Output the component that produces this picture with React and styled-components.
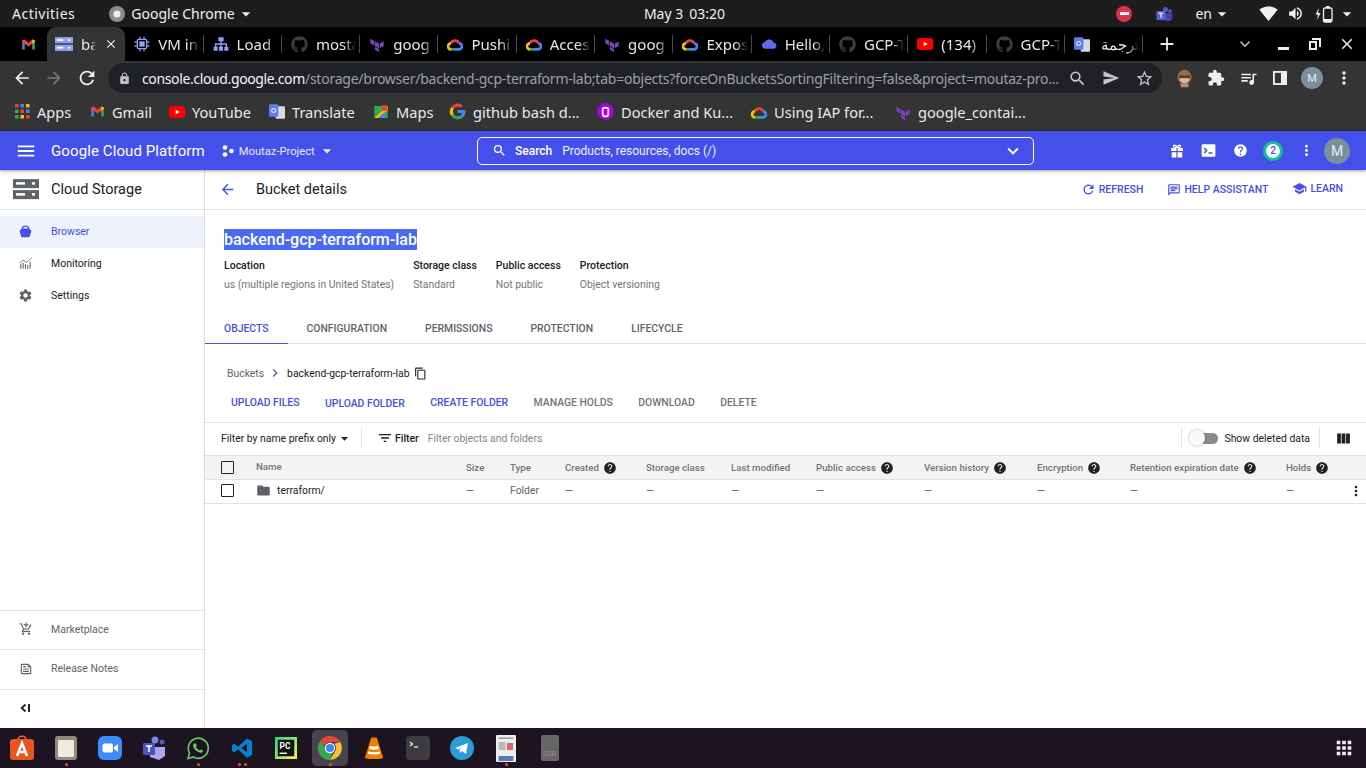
import React from 'react';
import styled, { createGlobalStyle } from 'styled-components';
import {
  MdMenu, MdArrowBack, MdSearch, MdExpandMore, MdHelp, MdMoreVert, MdFolder, MdContentCopy, MdFilterList,
  MdViewColumn, MdSettings, MdSchool, MdRefresh, MdStarBorder, MdExtension, MdQueueMusic, MdLock,
  MdSend, MdArrowDropDown, MdClose, MdAdd, MdChevronRight, MdArrowForward, MdSignalWifi4Bar, MdVolumeUp,
  MdApps, MdKeyboardArrowDown, MdOutlineAddShoppingCart, MdOutlineFeed, MdOutlineChat
} from 'react-icons/md';
import { FaGithub } from 'react-icons/fa';

const Global = createGlobalStyle`
  html, body { margin: 0; padding: 0; height: 100%; overflow: hidden; background: #fff; }
  * { box-sizing: border-box; }
  #root { height: 768px; width: 1366px; }
  ::selection { background: #4a6af5; }
`;

const UI = `"Noto Sans", "Open Sans", sans-serif`;
const RB = `Roboto, "Liberation Sans", sans-serif`;
const BLUE = '#4550ea';
const CHROME = '#343434';

const Page = styled.div`
  width: 1366px; height: 768px; display: flex; flex-direction: column; overflow: hidden;
`;

/* ---------- Ubuntu top bar ---------- */
const TopBar = styled.div`
  height: 27px; background: #1d1d1d; color: #f0f0f0; display: grid; grid-template-columns: 1fr auto 1fr;
  align-items: center; font: 14px ${UI}; padding: 0 9px 0 12px; flex: none;
`;
const TopLeft = styled.div`display: flex; align-items: center;`;
const Activities = styled.span`letter-spacing: 0.5px;`;
const TopApp = styled.div`display: flex; align-items: center; gap: 6px; margin-left: 34px;`;
const TopCenter = styled.div`display: flex; gap: 6px;`;
const TopRight = styled.div`display: flex; align-items: center; justify-content: flex-end;`;
const NoEntry = styled.span`
  width: 16px; height: 16px; border-radius: 50%; background: #e0314a; display: flex; align-items: center; justify-content: center;
  &::after { content: ''; width: 9px; height: 2.5px; background: #fff; }
`;
const Lang = styled.span`display: flex; align-items: center; margin: 0 27px 0 22px; font-size: 14px;`;
const Dim = styled.span`display: inline-flex; margin-left: ${p => p.$ml || 0}px;`;

/* ---------- Chrome tabs ---------- */
const TabStrip = styled.div`height: 34px; background: #000; display: flex; align-items: stretch; flex: none; color: #e8e8e8;`;
const PinTab = styled.div`width: 47px; display: flex; align-items: center; justify-content: center; padding-left: 9px;`;
const Tab = styled.div`
  width: 78.3px; display: flex; align-items: center; padding-left: ${p => p.$active ? 8 : 9}px; gap: 8px; font: 15px ${UI};
  position: relative; flex: none;
  background: ${p => p.$active ? CHROME : 'transparent'};
  border-radius: ${p => p.$active ? '9px 9px 0 0' : 0};
  &::after {
    content: ''; position: absolute; right: 0; top: 8px; bottom: 8px; width: 1px;
    background: ${p => p.$sep ? '#4a4a4a' : 'transparent'};
  }
`;
const TabText = styled.span`
  flex: 1; min-width: 0; overflow: hidden; white-space: nowrap; margin-right: ${p => p.$active ? 0 : 4}px;
  -webkit-mask-image: linear-gradient(to right, #000 70%, transparent);
  mask-image: linear-gradient(to right, #000 70%, transparent);
`;
const TabX = styled.span`display: flex; margin-right: 7px; color: #eee;`;
const NewTab = styled.div`width: 48px; display: flex; align-items: center; justify-content: center;`;
const WinCtl = styled.div`
  margin-left: auto; display: grid; grid-template-columns: 44px 32px 32px 32px; justify-items: center; align-items: center;
  padding-right: 3px; color: #eee;
`;
const WinMin = styled.span`width: 11px; height: 2.5px; background: #eee; margin-top: 9px;`;

/* ---------- Chrome toolbar ---------- */
const Toolbar = styled.div`
  height: 34px; background: ${CHROME}; display: flex; align-items: center; flex: none; color: #eee; padding-left: 12px;
`;
const NavBtns = styled.div`display: flex; align-items: center; gap: 12px; width: 96px;`;
const Omni = styled.div`
  width: 1054px; height: 30px; background: #202124; border-radius: 15px; display: flex; align-items: center; padding: 0 8px 0 10px;
  font: 14px ${UI}; color: #9aa0a6;
`;
const Url = styled.div`
  flex: 1; white-space: nowrap; overflow: hidden; margin-left: 11px; letter-spacing: -0.24px;
  b { font-weight: 400; color: #f1f3f4; letter-spacing: -0.37px; }
`;
const OmniIcons = styled.div`display: flex; align-items: center; gap: 15px; color: #c4c7c5; margin-left: 8px;`;
const ToolRight = styled.div`display: flex; align-items: center; margin-left: 6px;`;
const ToolSlot = styled.span`width: 32px; display: flex; justify-content: center; flex: none;`;
const Avatar = styled.span`
  width: ${p => p.$s}px; height: ${p => p.$s}px; border-radius: 50%; background: #78909c; color: #e8eaed; flex: none;
  display: flex; align-items: center; justify-content: center; font: ${p => p.$f}px ${RB}; margin-left: ${p => p.$ml || 0}px;
`;

/* ---------- Bookmarks ---------- */
const Bookmarks = styled.div`
  height: 36px; background: ${CHROME}; display: flex; align-items: center; flex: none; padding: 0 0 2px 15px; color: #e8eaed;
  font: 14.6px ${UI}; border-bottom: 1px solid #2a2a2a;
`;
const Bm = styled.div`display: flex; align-items: center; gap: 7px; width: ${p => p.$w}px; flex: none; white-space: nowrap;`;

/* ---------- GCP bar ---------- */
const GcpBar = styled.div`
  height: 39px; background: ${BLUE}; display: grid; grid-template-columns: 477px 557px 1fr; align-items: center; flex: none; color: #fff;
  position: relative; z-index: 2; box-shadow: 0 1px 3px rgba(0,0,0,.4);
`;
const GcpLeft = styled.div`display: flex; align-items: center; padding-left: 15px;`;
const Brand = styled.span`font: 15px ${RB}; margin-left: 14px; letter-spacing: 0.1px; white-space: nowrap;`;
const Project = styled.span`display: flex; align-items: center; margin-left: 17px; font: 11.2px ${RB}; color: #e8e9fd; gap: 5px; padding-top: 1px;`;
const Search = styled.div`
  height: 28px; border: 1px solid #fff; border-radius: 5px; display: flex; align-items: center; padding: 0 9px 0 14px; font: 12px ${RB};
  b { font-weight: 500; margin: 0 10px 0 8px; }
  span { flex: 1; color: #f0f0ff; }
`;
const GcpRight = styled.div`display: flex; align-items: center; padding-left: 136px; gap: 14px;`;
const IconSlot = styled.span`width: ${p => p.$w || 18}px; display: flex; justify-content: center; flex: none; margin-left: ${p => p.$ml || 0}px;`;
const Notif = styled.span`
  width: 20px; height: 20px; border-radius: 50%; background: #fff; border: 3px solid #10c29a; color: ${BLUE}; font: 500 10px ${RB};
  display: flex; align-items: center; justify-content: center; flex: none;
`;

/* ---------- Main ---------- */
const Body = styled.div`flex: 1; display: flex; min-height: 0; background: #fff; font: 10.5px ${RB};`;
const Side = styled.aside`width: 205px; border-right: 1px solid #dcdcdc; display: flex; flex-direction: column; flex: none;`;
const SideHead = styled.div`
  height: 40px; border-bottom: 1px solid #e2e2e2; display: flex; align-items: center; padding-left: 13px; gap: 12px;
  font: 14.5px ${RB}; color: #202124; flex: none;
`;
const SideNav = styled.nav`padding-top: 6px; flex: 1;`;
const NavItem = styled.div`
  height: 32px; display: flex; align-items: center; padding-bottom: 2px; color: ${p => p.$active ? BLUE : '#202124'};
  background: ${p => p.$active ? '#eef2fd' : 'transparent'};
`;
const NavIcon = styled.span`width: 51px; display: flex; justify-content: center; color: ${p => p.$c || '#5f6368'}; flex: none;`;
const FootItem = styled.div`
  height: ${p => p.$h}px; border-top: 1px solid #e2e2e2; display: flex; align-items: center; color: #5f6368; flex: none; padding-bottom: 2px;
`;
const Main = styled.main`flex: 1; min-width: 0; display: flex; flex-direction: column;`;
const PageHead = styled.div`
  height: 40px; border-bottom: 1px solid #e2e2e2; display: flex; align-items: center; padding-left: 14px; font: 14.5px ${RB}; color: #202124; flex: none;
`;
const HeadTitle = styled.div`margin-left: 20px; flex: 1;`;
const HeadActions = styled.div`display: flex; align-items: center; padding: 0 23px 2px 0; gap: 24px; color: ${BLUE}; font: 500 10.5px ${RB};`;
const HeadAct = styled.span`display: flex; align-items: center; gap: 3px; white-space: nowrap; transform: translateY(${p => p.$dy || 0}px);`;
const Summary = styled.section`padding: 19px 19px 0; flex: none; height: 100px;`;
const BucketName = styled.div`
  display: inline-block; background: #4a6af5; color: #fff; font: 500 16px/21px ${RB};
`;
const Meta = styled.div`display: flex; gap: 19px; margin-top: 10px;`;
const MetaCol = styled.div`display: flex; flex-direction: column; gap: 6px;`;
const MetaLabel = styled.div`font: 500 10.5px/12px ${RB}; color: #202124;`;
const MetaVal = styled.div`font: 10.4px/14px ${RB}; color: #70757a;`;
const Tabs = styled.div`height: 34px; border-bottom: 1px solid #e2e2e2; display: flex; flex: none;`;
const TabItem = styled.div`
  padding: 0 19px; font: 500 10.4px/38px ${RB}; height: 34px; color: ${p => p.$active ? BLUE : '#5f6368'};
  border-bottom: ${p => p.$active ? `1px solid ${BLUE}` : '0'};
`;
const Crumb = styled.div`
  display: flex; align-items: center; height: 20px; margin: 19px 0 0 22px; color: #202124; font: 10.4px ${RB}; flex: none;
`;
const CrumbDim = styled.span`color: #5f6368;`;
const Actions = styled.div`
  display: flex; align-items: center; height: 40px; gap: 25.5px; padding: 0 0 1px 26px; flex: none; font: 500 10.4px ${RB};
  border-bottom: 1px solid #e2e2e2;
`;
const Act = styled.span`color: ${p => p.$on ? BLUE : '#70757a'}; transform: translateY(${p => p.$dy || 0}px);`;
const FilterRow = styled.div`height: 32px; display: flex; align-items: center; flex: none; padding: 0 0 2px 16px; color: #202124; font: 10.4px ${RB};`;
const VBar = styled.span`width: 1px; height: 20px; background: #e2e2e2; flex: none; margin: ${p => p.$m};`;
const FilterHint = styled.span`color: #80868b; flex: 1; margin-left: 9px;`;
const FilterBold = styled.b`font-weight: 500; margin-left: 2px;`;
const Toggle = styled.span`
  width: 30px; height: 12px; flex: none; position: relative; margin: 0 5px 0 7px;
  &::before { content: ''; position: absolute; left: 8px; right: 1px; top: 1px; bottom: 0; border-radius: 6px; background: #8a8a8a; }
  &::after { content: ''; position: absolute; left: 0; top: -2px; width: 16px; height: 16px; border-radius: 50%; background: #fafafa; box-shadow: 0 0 2px rgba(0,0,0,.4); }
`;
const Cols = '51px 210px 44px 55px 81px 85px 85px 108px 113px 93px 156px 1fr';
const Row = styled.div`
  display: grid; grid-template-columns: ${Cols}; align-items: center; height: ${p => p.$head ? 25 : 24}px; flex: none;
  padding-bottom: ${p => p.$head ? 0 : 2}px;
  background: ${p => p.$head ? '#f3f3f3' : '#fff'}; border-top: ${p => p.$head ? '1px solid #e2e2e2' : 0};
  border-bottom: 1px solid #e2e2e2; color: ${p => p.$head ? '#70757a' : '#5f6368'};
  font: ${p => p.$head ? '500 9.7px' : '10.4px'} ${RB};
`;
const Cell = styled.div`display: flex; align-items: center; gap: 4px; white-space: nowrap;`;
const NameCell = styled(Cell)`transform: translateY(-1px);`;
const Check = styled.span`width: 13px; height: 13px; border: 1.5px solid #202124; border-radius: 1px; margin-left: 16px;`;
const FolderName = styled.span`color: #202124; margin-left: 2px;`;
const Spread = styled.div`flex: 1; display: flex; align-items: center; justify-content: space-between; padding-right: 2px;`;

/* ---------- Dock ---------- */
const Dock = styled.div`height: 40px; background: #1c1420; display: flex; align-items: center; flex: none;`;
const DockItem = styled.div`
  width: 44px; height: 40px; display: flex; align-items: center; justify-content: center; position: relative; flex: none;
  &::before {
    content: ''; position: absolute; left: 4px; right: 4px; top: 2px; bottom: 2px; border-radius: 5px;
    background: ${p => p.$active ? '#47424b' : 'transparent'};
  }
  svg { position: relative; }
`;
const Dots = styled.span`
  position: absolute; bottom: 2px; left: 0; right: 0; display: flex; gap: 3px; justify-content: center;
  i { width: 3px; height: 3px; border-radius: 50%; background: #e95420; }
`;
const DockEnd = styled.div`margin-left: auto; padding-right: 11px; color: #eee; display: flex;`;

/* ---------- Logos ---------- */
const Gmail = ({ s = 15 }) => (
  <svg width={s} height={s} viewBox="0 0 24 24"><path fill="#4285f4" d="M2 5v15h4V10z"/><path fill="#34a853" d="M22 5v15h-4V10z"/><path fill="#ea4335" d="M2 5l4-1 6 5 6-5 4 1v3l-10 7L2 8z"/><path fill="#fbbc04" d="M18 4l4 1v3l-4 3z"/></svg>
);
const GCloud = ({ s = 16, mono }) => (
  <svg width={s} height={s} viewBox="0 0 24 24" fill="none" strokeWidth="4">
    {mono ? <path fill="#5b6cf0" d="M7 19a5 5 0 0 1-1-10 7 7 0 0 1 13 1 4.5 4.5 0 0 1-1 9z"/> : <>
      <path stroke="#ea4335" d="M6 11a6.500 6.500 0 0 1 12 0"/>
      <path stroke="#4285f4" d="M18 11c3 0 4.500 2 4.500 4.500S20 20 18 20H12"/>
      <path stroke="#34a853" d="M12 20H6"/>
      <path stroke="#fbbc04" d="M6 20c-2.500 0-4.500-2-4.500-4.500S3.500 11 6 11"/>
    </>}
  </svg>
);
const Terraform = ({ s = 16 }) => (
  <svg width={s} height={s} viewBox="0 0 24 24"><path fill="#7b42bc" d="M9 8l6 3.500v7L9 15zM16 11.500l6-3.500v7l-6 3.500zM2 4l6 3.500v7L2 11zM9 16l6 3.500V24l-6-3.500z"/></svg>
);
const Yt = () => (
  <svg width="16" height="16" viewBox="0 0 24 24"><rect x="0" y="3" width="24" height="18" rx="4.500" fill="#f00"/><path fill="#fff" d="M10 8.500v7l6-3.500z"/></svg>
);
const Translate = () => (
  <svg width="16" height="17" viewBox="0 0 24 24"><rect x="10" y="4" width="14" height="19" rx="1.500" fill="#d8dade"/><rect x="0" y="1" width="14" height="19" rx="1.500" fill="#5b7ff0"/><circle cx="7" cy="10.500" r="3" fill="none" stroke="#fff" strokeWidth="1.500"/></svg>
);
const Maps = () => (
  <svg width="16" height="16" viewBox="0 0 24 24"><path fill="#34a853" d="M2 3h14l6 0v18H2z"/><path fill="#fbbc04" d="M2 21L22 3v6L8 21z"/><path fill="#4285f4" d="M8 21l7-7 7 7z"/><circle cx="17" cy="6" r="4.500" fill="#ea4335"/></svg>
);
const GoogleG = () => (
  <svg width="17" height="17" viewBox="0 0 24 24" fill="none" strokeWidth="4.500">
    <path stroke="#ea4335" d="M5 7a9 9 0 0 1 13-2"/><path stroke="#fbbc04" d="M5 7a9 9 0 0 0 0 10"/><path stroke="#34a853" d="M5 17a9 9 0 0 0 13 2"/><path stroke="#4285f4" d="M18 19a9 9 0 0 0 3-7H12"/>
  </svg>
);
const PurpleU = () => (
  <svg width="17" height="17" viewBox="0 0 24 24"><circle cx="12" cy="12" r="12" fill="#a400e1"/><path fill="none" stroke="#fff" strokeWidth="2.500" d="M8 7v8a4 4 0 0 0 8 0V7M8 7h8"/></svg>
);
const AppsGrid = () => (
  <svg width="15" height="15" viewBox="0 0 15 15">
    {[0,5.500,11].flatMap((y,i)=>[0,5.500,11].map((x,j)=><rect key={`${i}${j}`} x={x} y={y} width="3.500" height="3.500" fill={['#ea4335','#4285f4','#fbbc04','#34a853','#ea4335','#4285f4','#34a853','#fbbc04','#ea4335'][i*3+j]}/>))}
  </svg>
);
const CPU = () => (
  <svg width="16" height="16" viewBox="0 0 24 24" fill="none" stroke="#8ea3f5" strokeWidth="2"><rect x="5" y="5" width="14" height="14" rx="2"/><rect x="9" y="9" width="6" height="6" fill="#8ea3f5"/><path d="M9 1v3M15 1v3M9 20v3M15 20v3M1 9h3M1 15h3M20 9h3M20 15h3"/></svg>
);
const LB = () => (
  <svg width="16" height="16" viewBox="0 0 24 24"><path fill="#8ea3f5" d="M8 2h8v6h-3v3h8v5h2v6h-6v-6h2v-3h-6v3h2v6H9v-6h2v-3H5v3h2v6H1v-6h2v-5h8V8H8z"/></svg>
);
const StorageIcon = ({ c = '#8ea3f5', s = 18 }) => (
  <svg width={s} height={s * 0.78} viewBox="0 0 26 20"><rect width="26" height="9" fill={c}/><rect y="11" width="26" height="9" fill={c}/><rect x="3" y="3" width="9" height="2.500" fill="#fff"/><rect x="19" y="3" width="3" height="2.500" fill="#fff"/><rect x="3" y="14" width="9" height="2.500" fill="#fff"/><rect x="19" y="14" width="3" height="2.500" fill="#fff"/></svg>
);
const Bucket = () => (
  <svg width="13" height="13" viewBox="0 0 24 24"><path fill="none" stroke={BLUE} strokeWidth="2.500" d="M6 8c0-8 12-8 12 0"/><path fill={BLUE} d="M1 11l3-3.500c.5-.5 1-1 2-1h12c1 0 1.500.5 2 1l3 3.500-3 10c-.3 1-1 1.500-2 1.500H6c-1 0-1.700-.5-2-1.500z"/></svg>
);
const Monitor = () => (
  <svg width="14" height="14" viewBox="0 0 24 24"><path fill="#6b6f73" d="M2 22v-7l2-2v9zM6 22v-10l2-1v11zM10 22v-9l2 1v8zM14 22v-6l2-1v7zM18 22v-11l2-2v13z"/><path fill="none" stroke="#6b6f73" strokeWidth="1.500" d="M1 12l6-5 6 4 9-8"/></svg>
);
const Term = () => (
  <svg width="15" height="15" viewBox="0 0 24 24"><rect x="1" y="2" width="22" height="20" rx="2" fill="#fff"/><path fill="none" stroke={BLUE} strokeWidth="2.500" d="M5 8l4 4-4 4"/><path stroke={BLUE} strokeWidth="2.500" d="M12 16h6"/></svg>
);
const Gift = () => (
  <svg width="14" height="14" viewBox="0 0 24 24"><path fill="#fff" d="M2 7h9v5H2zM13 7h9v5h-9zM3 14h8v9H3zM13 14h8v9h-8z"/><path fill="none" stroke="#fff" strokeWidth="2" d="M12 6C10 1 5 1 6 4c.3 1.500 3 2 6 2zM12 6c2-5 7-5 6-2-.3 1.500-3 2-6 2z"/></svg>
);
const Collapse = () => (
  <svg width="12" height="12" viewBox="0 0 12 12"><path fill="none" stroke="#202124" strokeWidth="1.800" d="M5.500 2.500L1.700 6l3.800 3.500"/><rect x="8" y="2" width="2" height="8" fill="#202124"/></svg>
);
const Battery = () => (
  <svg width="20" height="18" viewBox="0 0 20 18"><path fill="#f0f0f0" d="M4 3L0.500 9.500H3L2 15l3.500-7H3z"/><rect x="8.500" y="3" width="8.500" height="14" rx="1.500" fill="none" stroke="#f0f0f0" strokeWidth="1.300"/><rect x="11" y="1" width="3.500" height="2" fill="#f0f0f0"/><rect x="9" y="14" width="7.500" height="3" fill="#f0f0f0"/></svg>
);
const Restore = () => (
  <svg width="12" height="12" viewBox="0 0 12 12"><path fill="#eee" d="M3 0h9v9h-2V2H3z"/><path fill="none" stroke="#eee" strokeWidth="2" d="M1 4h6v7H1z"/></svg>
);

const tabsData = [
  { i: <StorageIcon />, t: 'ba', active: true },
  { i: <CPU />, t: 'VM in', sep: true },
  { i: <LB />, t: 'Load', sep: true },
  { i: <FaGithub size={17} color="#3c3c3c" />, t: 'mosta', sep: true },
  { i: <Terraform />, t: 'goog', sep: true },
  { i: <GCloud />, t: 'Pushi', sep: true },
  { i: <GCloud />, t: 'Acces', sep: true },
  { i: <Terraform />, t: 'goog', sep: true },
  { i: <GCloud />, t: 'Expos', sep: true },
  { i: <GCloud mono />, t: 'Hello,', sep: true },
  { i: <FaGithub size={17} color="#3c3c3c" />, t: 'GCP-T', sep: true },
  { i: <Yt />, t: '(134)', sep: true },
  { i: <FaGithub size={17} color="#3c3c3c" />, t: 'GCP-T', sep: true },
  { i: <Translate />, t: 'ترجمة', sep: true },
];

const bookmarks = [
  { i: <AppsGrid />, t: 'Apps', w: 75 },
  { i: <Gmail />, t: 'Gmail', w: 79 },
  { i: <Yt />, t: 'YouTube', w: 100 },
  { i: <Translate />, t: 'Translate', w: 104 },
  { i: <Maps />, t: 'Maps', w: 76 },
  { i: <GoogleG />, t: 'github bash d...', w: 148 },
  { i: <PurpleU />, t: 'Docker and Ku...', w: 154 },
  { i: <GCloud />, t: 'Using IAP for...', w: 144 },
  { i: <Terraform />, t: 'google_contai...', w: 140 },
];

const Help = () => <MdHelp size={14} color="#202124" />;

const dock = [
  { i: <svg width="24" height="26" viewBox="0 0 24 26"><path fill="none" stroke="#e8623a" strokeWidth="1.500" d="M8 5c0-5 8-5 8 0"/><rect y="4" width="24" height="21" rx="3" fill="#e95420"/><path fill="none" stroke="#fff" strokeWidth="2.500" d="M7 21l5-13 5 13M8.500 17h7"/></svg> },
  { i: <svg width="22" height="24" viewBox="0 0 22 24"><rect width="22" height="24" rx="3" fill="#8f8a7c"/><rect x="3" y="4" width="16" height="17" rx="1" fill="#eeeae0"/></svg>, d: 1 },
  { i: <svg width="24" height="24" viewBox="0 0 24 24"><rect width="24" height="24" rx="6" fill="#3d8bff"/><rect x="4.500" y="7.500" width="10.500" height="9" rx="2" fill="#fff"/><path fill="#fff" d="M16 11l4-3v8l-4-3z"/></svg> },
  { i: <svg width="24" height="26" viewBox="0 0 24 26"><circle cx="13" cy="5" r="3.500" fill="#7b83eb"/><circle cx="20" cy="7" r="2.500" fill="#5059c9"/><path fill="#b3a4ef" d="M8 12h15v9l-6 4-9-3z"/><rect x="1" y="8" width="12" height="12" rx="1" fill="#4b53bc"/><path stroke="#fff" strokeWidth="1.600" d="M4 11h6M7 11v6"/></svg> },
  { i: <svg width="24" height="25" viewBox="0 0 24 24" fill="none"><path stroke="#6fbe6b" strokeWidth="1.700" d="M2 22l1.500-5.500A10 10 0 1 1 7.500 20.500z"/><path fill="#6fbe6b" d="M8.500 7c1-.8 1.800.2 2.300 1.600.2.700-.8 1.200-.7 1.800.4 1.300 2 2.800 3.400 3.400.7.100 1.100-1 1.800-.8 1.400.5 2.300 1.300 1.500 2.300-1.200 1.300-3.300 1-5.400-.2-3-1.800-5.400-5.700-3.900-7.600z"/></svg>, d: 1 },
  { i: <svg width="21" height="24" viewBox="0 0 24 24"><path fill="#0a7fd0" d="M17 1l6 3v16l-6 3-10-9.500-4.500 3.500L0 15.500V8.500L2.500 7 7 10.500zM17 7l-6 5 6 5z"/></svg>, d: 2 },
  { i: <svg width="22" height="24" viewBox="0 0 24 24"><defs><linearGradient id="pcg" x1="0" y1="0" x2="1" y2="1"><stop offset="0" stopColor="#21d789"/><stop offset="1" stopColor="#fcf84a"/></linearGradient></defs><rect width="24" height="24" fill="url(#pcg)"/><rect x="3" y="3" width="18" height="18" fill="#111"/><text x="5" y="13" fontSize="9" fontWeight="700" fontFamily="Roboto" fill="#fff">PC</text><rect x="5" y="17" width="8" height="1.500" fill="#fff"/></svg> },
  { i: <svg width="26" height="26" viewBox="0 0 24 24" fill="none"><path fill="#ea4335" d="M12 1a11 11 0 0 1 9.500 5.500H12a5.500 5.500 0 0 0-5.300 4L3.300 5A11 11 0 0 1 12 1z"/><path fill="#fbc02d" d="M21.500 6.500A11 11 0 0 1 12 23l4.800-8.300A5.500 5.500 0 0 0 16 8z"/><path fill="#34a853" d="M12 23A11 11 0 0 1 3.300 5l4.700 8.300a5.500 5.500 0 0 0 7 2.200z"/><circle cx="12" cy="12" r="4.300" fill="#4285f4" stroke="#fff" strokeWidth="1"/></svg>, d: 1, active: true },
  { i: <svg width="22" height="25" viewBox="0 0 24 26"><path fill="#f57c00" d="M9 1h6l7 22c0 2-20 2-20 0z"/><path fill="#fff" d="M7.700 10c2 1 6.600 1 8.600 0l1 3.300c-2.500 1.300-8.100 1.300-10.600 0z"/><path fill="#fff" d="M6 16c2.500 1.300 9.500 1.300 12 0l.7 2.500c-3 1.500-10.400 1.500-13.400 0z"/></svg> },
  { i: <svg width="24" height="24" viewBox="0 0 24 24"><rect width="24" height="24" rx="4" fill="#3c3c3e"/><path stroke="#eee" strokeWidth="1.300" fill="none" d="M4 6l2.500 2L4 10"/><path stroke="#eee" strokeWidth="1.300" d="M8 11h4"/></svg> },
  { i: <svg width="24" height="24" viewBox="0 0 24 24"><circle cx="12" cy="12" r="12" fill="#2a9dd8"/><path fill="#fff" d="M5 12l13-5-2 11-4-3-2 2-.5-3.500L15 9.500l-6.500 4z"/></svg> },
  { i: <svg width="20" height="27" viewBox="0 0 20 27"><rect width="20" height="27" rx="1" fill="#eee"/><rect x="2.500" y="2.500" width="15" height="1.500" fill="#999"/><rect x="2.500" y="7" width="7" height="8" fill="#bbb"/><rect x="11" y="8" width="6" height="7" fill="#e06666"/><rect x="2.500" y="21" width="15" height="5" fill="#5a78b5"/></svg>, d: 1 },
  { i: <svg width="18" height="26" viewBox="0 0 18 26"><rect width="18" height="26" rx="2" fill="#666"/><text x="2" y="21" fontSize="7" fontWeight="700" fontFamily="Roboto" fill="#888">SSD</text></svg> },
];

export default function App() {
  return (
    <Page>
      <Global />
      <TopBar>
        <TopLeft>
          <Activities>Activities</Activities>
          <TopApp>
            <svg width="16" height="16" viewBox="0 0 16 16"><circle cx="8" cy="8" r="8" fill="#8c8c8c"/><circle cx="8" cy="8" r="3.500" fill="#eee"/></svg>
            Google Chrome
            <MdArrowDropDown size={20} style={{ marginLeft: -5 }} />
          </TopApp>
        </TopLeft>
        <TopCenter><span>May 3</span><span>03:20</span></TopCenter>
        <TopRight>
          <NoEntry />
          <Dim $ml={23}><svg width="18" height="18" viewBox="0 0 24 24"><circle cx="14" cy="6" r="3.500" fill="#5059c9"/><circle cx="20" cy="8" r="2.500" fill="#5059c9"/><path fill="#3e45a8" d="M9 11h14v7a5 5 0 0 1-7 3l-7-2z"/><rect x="2" y="8" width="12" height="12" rx="1" fill="#5b63d3"/><path stroke="#fff" strokeWidth="1.600" d="M5 11h6M8 11v6"/></svg></Dim>
          <Lang>en<MdArrowDropDown size={20} /></Lang>
          <MdSignalWifi4Bar size={19} />
          <Dim $ml={9}><MdVolumeUp size={17} /></Dim>
          <Dim $ml={11}><Battery /></Dim>
          <MdArrowDropDown size={20} style={{ marginLeft: 2 }} />
        </TopRight>
      </TopBar>

      <TabStrip>
        <PinTab><Gmail /></PinTab>
        {tabsData.map((t, n) => (
          <Tab key={n} $active={t.active} $sep={t.sep}>
            {t.i}
            <TabText $active={t.active} dir={t.t === 'ترجمة' ? 'rtl' : undefined}>{t.t}</TabText>
            {t.active && <TabX><MdClose size={14} /></TabX>}
          </Tab>
        ))}
        <NewTab><MdAdd size={22} /></NewTab>
        <WinCtl>
          <MdKeyboardArrowDown size={20} color="#bbb" />
          <WinMin />
          <Restore />
          <MdClose size={18} />
        </WinCtl>
      </TabStrip>

      <Toolbar>
        <NavBtns>
          <MdArrowBack size={20} />
          <MdArrowForward size={20} color="#777" />
          <MdRefresh size={22} />
        </NavBtns>
        <Omni>
          <MdLock size={13} color="#bdc1c6" />
          <Url><b>console.cloud.google.com</b>/storage/browser/backend-gcp-terraform-lab;tab=objects?forceOnBucketsSortingFiltering=false&amp;project=moutaz-pro...</Url>
          <OmniIcons>
            <MdSearch size={19} />
            <MdSend size={18} />
            <MdStarBorder size={19} />
          </OmniIcons>
        </Omni>
        <ToolRight>
          <ToolSlot><svg width="19" height="19" viewBox="0 0 24 24"><circle cx="12" cy="10" r="9" fill="#9a6b4b"/><ellipse cx="12" cy="13" rx="6" ry="5" fill="#e0b48f"/><rect x="5" y="8" width="14" height="3.500" fill="#5c3a26"/><rect x="7" y="18" width="10" height="5" fill="#b08d73"/></svg></ToolSlot>
          <ToolSlot><MdExtension size={18} /></ToolSlot>
          <ToolSlot><MdQueueMusic size={19} /></ToolSlot>
          <ToolSlot><svg width="14" height="14" viewBox="0 0 15 15"><rect width="15" height="15" fill="#eee"/><rect x="2" y="2" width="6.500" height="11" fill={CHROME}/></svg></ToolSlot>
          <ToolSlot><Avatar $s={22} $f={11}>M</Avatar></ToolSlot>
          <ToolSlot><MdMoreVert size={20} /></ToolSlot>
        </ToolRight>
      </Toolbar>

      <Bookmarks>
        {bookmarks.map(b => <Bm key={b.t} $w={b.w}>{b.i}{b.t}</Bm>)}
      </Bookmarks>

      <GcpBar>
        <GcpLeft>
          <MdMenu size={22} />
          <Brand>Google Cloud Platform</Brand>
          <Project>
            <svg width="12" height="12" viewBox="0 0 12 12"><circle cx="3" cy="2.500" r="2.300" fill="#fff"/><circle cx="9.500" cy="6" r="2.300" fill="#fff"/><circle cx="3" cy="9.500" r="2.300" fill="#fff"/></svg>
            Moutaz-Project
            <MdArrowDropDown size={20} style={{ marginLeft: -3 }} />
          </Project>
        </GcpLeft>
        <Search>
          <MdSearch size={15} />
          <b>Search</b>
          <span>Products, resources, docs (/)</span>
          <MdExpandMore size={22} />
        </Search>
        <GcpRight>
          <IconSlot $w={14}><Gift /></IconSlot>
          <IconSlot $ml={1}><Term /></IconSlot>
          <IconSlot><MdHelp size={15} /></IconSlot>
          <Notif>2</Notif>
          <IconSlot $w={18}><MdMoreVert size={17} /></IconSlot>
          <Avatar $s={26} $f={14} $ml={-5}>M</Avatar>
        </GcpRight>
      </GcpBar>

      <Body>
        <Side>
          <SideHead><StorageIcon c="#5f6368" s={26} />Cloud Storage</SideHead>
          <SideNav>
            <NavItem $active><NavIcon><Bucket /></NavIcon>Browser</NavItem>
            <NavItem><NavIcon><Monitor /></NavIcon>Monitoring</NavItem>
            <NavItem><NavIcon><MdSettings size={15} /></NavIcon>Settings</NavItem>
          </SideNav>
          <FootItem $h={39}><NavIcon><MdOutlineAddShoppingCart size={14} /></NavIcon>Marketplace</FootItem>
          <FootItem $h={40}><NavIcon><MdOutlineFeed size={14} /></NavIcon>Release Notes</FootItem>
          <FootItem $h={39}><NavIcon><Collapse /></NavIcon></FootItem>
        </Side>
        <Main>
          <PageHead>
            <MdArrowBack size={17} color={BLUE} />
            <HeadTitle>Bucket details</HeadTitle>
            <HeadActions>
              <HeadAct $dy={1}><MdRefresh size={15} />REFRESH</HeadAct>
              <HeadAct $dy={1}><MdOutlineChat size={14} />HELP ASSISTANT</HeadAct>
              <HeadAct><MdSchool size={15} />LEARN</HeadAct>
            </HeadActions>
          </PageHead>
          <Summary>
            <BucketName>backend-gcp-terraform-lab</BucketName>
            <Meta>
              <MetaCol><MetaLabel>Location</MetaLabel><MetaVal>us (multiple regions in United States)</MetaVal></MetaCol>
              <MetaCol><MetaLabel>Storage class</MetaLabel><MetaVal>Standard</MetaVal></MetaCol>
              <MetaCol><MetaLabel>Public access</MetaLabel><MetaVal>Not public</MetaVal></MetaCol>
              <MetaCol><MetaLabel>Protection</MetaLabel><MetaVal>Object versioning</MetaVal></MetaCol>
            </Meta>
          </Summary>
          <Tabs>
            <TabItem $active>OBJECTS</TabItem>
            <TabItem>CONFIGURATION</TabItem>
            <TabItem>PERMISSIONS</TabItem>
            <TabItem>PROTECTION</TabItem>
            <TabItem>LIFECYCLE</TabItem>
          </Tabs>
          <Crumb>
            <CrumbDim>Buckets</CrumbDim>
            <MdChevronRight size={16} color="#5f6368" style={{ margin: '0 4px 0 3px' }} />
            backend-gcp-terraform-lab
            <MdContentCopy size={13} color="#202124" style={{ marginLeft: 4 }} />
          </Crumb>
          <Actions>
            <Act $on>UPLOAD FILES</Act>
            <Act $on $dy={1}>UPLOAD FOLDER</Act>
            <Act $on>CREATE FOLDER</Act>
            <Act>MANAGE HOLDS</Act>
            <Act>DOWNLOAD</Act>
            <Act>DELETE</Act>
          </Actions>
          <FilterRow>
            Filter by name prefix only
            <MdArrowDropDown size={17} />
            <VBar $m="0 8px 0 8px" />
            <MdFilterList size={16} style={{ marginLeft: 7 }} />
            <FilterBold>Filter</FilterBold>
            <FilterHint>Filter objects and folders</FilterHint>
            <VBar $m="0" />
            <Toggle />
            Show deleted data
            <VBar $m="0 15px 0 9px" />
            <MdViewColumn size={17} style={{ marginRight: 14 }} />
          </FilterRow>
          <Row $head>
            <Cell><Check /></Cell>
            <NameCell>Name</NameCell>
            <Cell>Size</Cell>
            <Cell>Type</Cell>
            <Cell>Created <Help /></Cell>
            <Cell>Storage class</Cell>
            <Cell>Last modified</Cell>
            <Cell>Public access <Help /></Cell>
            <Cell>Version history <Help /></Cell>
            <Cell>Encryption <Help /></Cell>
            <Cell>Retention expiration date <Help /></Cell>
            <Cell>Holds <Help /></Cell>
          </Row>
          <Row>
            <Cell><Check /></Cell>
            <Cell><MdFolder size={15} color="#5f6368" /><FolderName>terraform/</FolderName></Cell>
            <Cell>—</Cell>
            <Cell>Folder</Cell>
            <Cell>—</Cell>
            <Cell>—</Cell>
            <Cell>—</Cell>
            <Cell>—</Cell>
            <Cell>—</Cell>
            <Cell>—</Cell>
            <Cell>—</Cell>
            <Cell><Spread>—<MdMoreVert size={16} color="#202124" /></Spread></Cell>
          </Row>
        </Main>
      </Body>

      <Dock>
        {dock.map((d, n) => (
          <DockItem key={n} $active={d.active}>
            {d.i}
            {d.d && <Dots>{Array.from({ length: d.d }).map((_, k) => <i key={k} />)}</Dots>}
          </DockItem>
        ))}
        <DockEnd><MdApps size={22} /></DockEnd>
      </Dock>
    </Page>
  );
}
